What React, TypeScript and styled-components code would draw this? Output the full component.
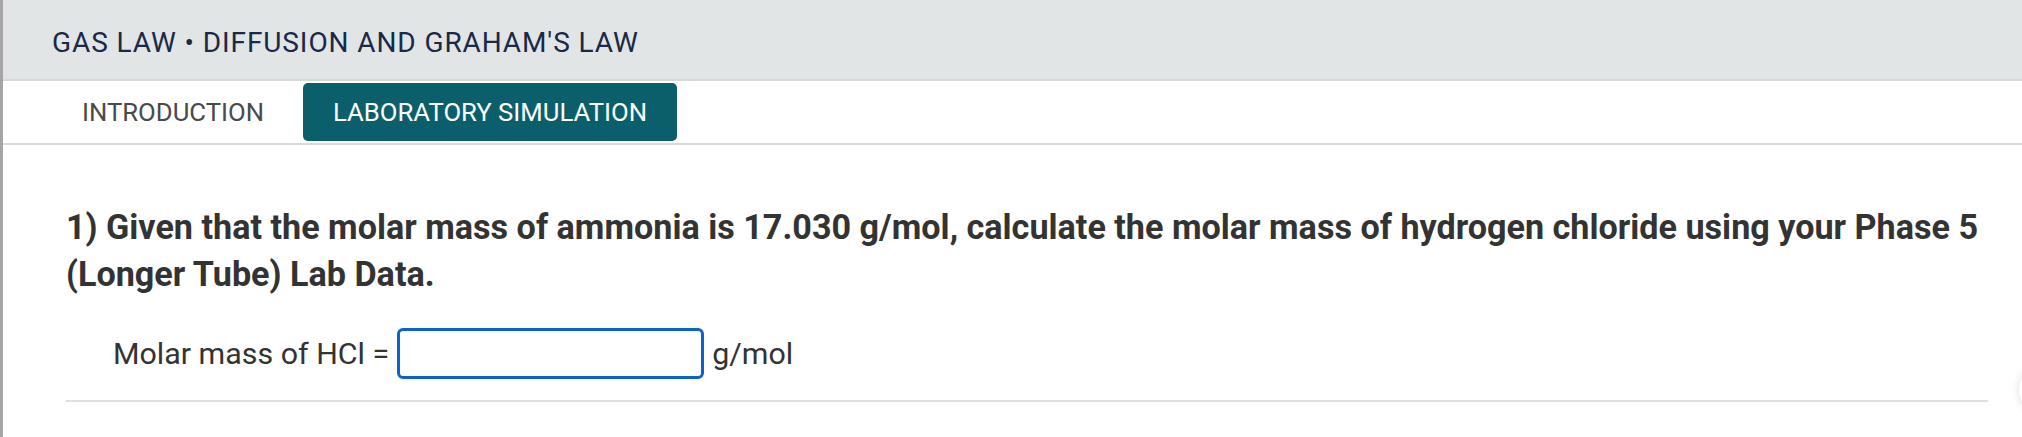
import React from 'react';
import styled, { createGlobalStyle } from 'styled-components';

const GlobalStyle = createGlobalStyle`
    html, body {
        margin: 0;
        padding: 0;
        background: #fff;
        overflow: hidden;
    }

    body {
        font-family: Roboto, "Liberation Sans", Arial, sans-serif;
    }
`;

const Page = styled.div`
    position: relative;
    min-height: 100vh;
    box-sizing: border-box;
    border-left: 3px solid #a5a5a5;
    overflow: hidden;
`;

const Header = styled.header`
    height: 81px;
    box-sizing: border-box;
    padding: 6px 0 0 49px;
    display: flex;
    align-items: center;
    background: #e1e5e6;
    border-bottom: 2px solid #d6d8d9;
`;

const Title = styled.h1`
    margin: 0;
    font-size: 28px;
    font-weight: 400;
    letter-spacing: 0.9px;
    color: #1a2946;
`;

const TabBar = styled.nav`
    height: 64px;
    box-sizing: border-box;
    padding-left: 49px;
    display: flex;
    align-items: center;
    gap: 9px;
    border-bottom: 2px solid #dadada;
`;

const Tab = styled.button<{ $active?: boolean }>`
    height: 58px;
    padding: 0 30px;
    border: 0;
    border-radius: 5px;
    font-family: inherit;
    font-size: 25.7px;
    font-weight: 400;
    background: ${p => (p.$active ? '#0b5f6b' : 'transparent')};
    color: ${p => (p.$active ? '#fff' : '#4a4a4a')};
    cursor: pointer;
`;

const Content = styled.main`
    padding: 59px 34px 0 63px;
`;

const QuestionBlock = styled.section`
    padding-bottom: 21px;
    border-bottom: 2px solid #e0e0e0;
`;

const Question = styled.p`
    margin: 0;
    font-size: 34.15px;
    font-weight: 700;
    line-height: 47px;
    color: #333;
`;

const AnswerRow = styled.div`
    margin-top: 30px;
    padding-left: 47px;
    display: flex;
    align-items: center;
    font-size: 30.4px;
    color: #333;
`;

const AnswerInput = styled.input`
    width: 307px;
    height: 51px;
    box-sizing: border-box;
    margin: 0 8px 0 8px;
    border: 3px solid #0b63cb;
    border-radius: 6px;
    outline: none;
    font-family: inherit;
    font-size: 26px;
    padding: 0 8px;
`;

// floating button peeking in from the right edge
const EdgeButton = styled.div`
    position: absolute;
    right: -49px;
    top: 364px;
    width: 52px;
    height: 52px;
    border-radius: 50%;
    background: #fff;
    box-shadow: 0 0 8px rgba(0, 0, 0, 0.14);
`;

function App() {
    return (
        <Page>
            <GlobalStyle />
            <Header>
                <Title>GAS LAW • DIFFUSION AND GRAHAM'S LAW</Title>
            </Header>
            <TabBar>
                <Tab>INTRODUCTION</Tab>
                <Tab $active>LABORATORY SIMULATION</Tab>
            </TabBar>
            <Content>
                <QuestionBlock>
                    <Question>
                        1) Given that the molar mass of ammonia is 17.030 g/mol, calculate the molar mass of hydrogen
                        chloride using your Phase 5 (Longer Tube) Lab Data.
                    </Question>
                    <AnswerRow>
                        <span>Molar mass of HCl =</span>
                        <AnswerInput type="text" aria-label="Molar mass of HCl" />
                        <span>g/mol</span>
                    </AnswerRow>
                </QuestionBlock>
            </Content>
            <EdgeButton />
        </Page>
    );
}

export default App;
